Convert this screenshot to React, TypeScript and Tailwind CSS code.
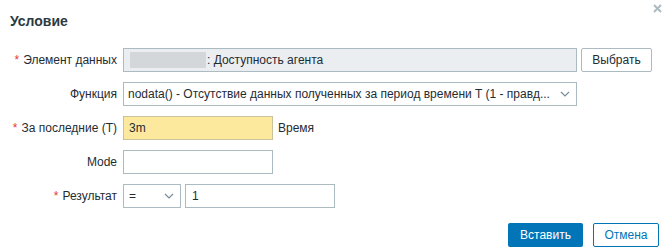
const Chevron = () => (
  <svg width="10" height="6" viewBox="0 0 10 6" className="shrink-0">
    <polyline points="1,1 5,5 9,1" fill="none" stroke="#768d99" strokeWidth="1.2" />
  </svg>
);

function Label({ text, required }: { text: string; required?: boolean }) {
  return (
    <div className="flex items-center justify-end pr-[6px] text-right">
      {required && <span className="mr-[4px] text-[#e33734]">*</span>}
      <span>{text}</span>
    </div>
  );
}

export default function App() {
  return (
    <div className="relative h-[252px] w-[667px] overflow-hidden bg-white font-['Liberation_Sans',Arial,sans-serif] text-[12px] text-[#1f2c33]">
      {/* close */}
      <svg width="9" height="9" viewBox="0 0 9 9" className="absolute right-[5px] top-[4px]">
        <path d="M1 1 L8 8 M8 1 L1 8" stroke="#acbbc2" strokeWidth="2" />
      </svg>

      <div className="h-[40px] pl-[10px] pt-[11px] text-[14px] font-bold text-[#2c3b42]">Условие</div>

      <div className="mt-[8px] grid grid-cols-[123px_1fr] gap-y-[10px]">
        <Label text="Элемент данных" required />
        <div className="flex h-[24px] gap-[4px]">
          <div className="flex h-[24px] w-[454px] items-center border border-[#acbbc2] bg-[#ebeef0] pl-[6px]">
            <span className="mr-[1px] h-[16px] w-[76px] bg-[#d4d7d9]" />
            <span>: Доступность агента</span>
          </div>
          <button className="h-[24px] w-[71px] rounded-[2px] border border-[#acbbc2] bg-white text-[#1f2c33]">
            Выбрать
          </button>
        </div>

        <Label text="Функция" />
        <div className="flex h-[24px] w-[454px] items-center justify-between border border-[#acbbc2] bg-white pl-[4px] pr-[6px]">
          <span>nodata() - Отсутствие данных полученных за период времени T (1 - правд...</span>
          <Chevron />
        </div>

        <Label text="За последние (T)" required />
        <div className="flex h-[24px] items-center gap-[5px]">
          <div className="flex h-[24px] w-[150px] items-center border border-[#c9c39c] bg-[#fde99d] pl-[5px]">3m</div>
          <span>Время</span>
        </div>

        <Label text="Mode" />
        <div className="h-[24px] w-[150px] border border-[#acbbc2] bg-white" />

        <Label text="Результат" required />
        <div className="flex h-[24px] gap-[4px]">
          <div className="flex h-[24px] w-[58px] items-center justify-between border border-[#acbbc2] bg-white pl-[5px] pr-[6px]">
            <span>=</span>
            <Chevron />
          </div>
          <div className="flex h-[24px] w-[150px] items-center border border-[#acbbc2] bg-white pl-[6px]">1</div>
        </div>
      </div>

      <div className="mt-[15px] flex justify-end gap-[10px] pr-[8px]">
        <button className="h-[24px] w-[75px] rounded-[2px] bg-[#0275b8] text-white">Вставить</button>
        <button className="h-[24px] w-[66px] rounded-[2px] border border-[#0275b8] bg-white text-[#0275b8]">Отмена</button>
      </div>
    </div>
  );
}
